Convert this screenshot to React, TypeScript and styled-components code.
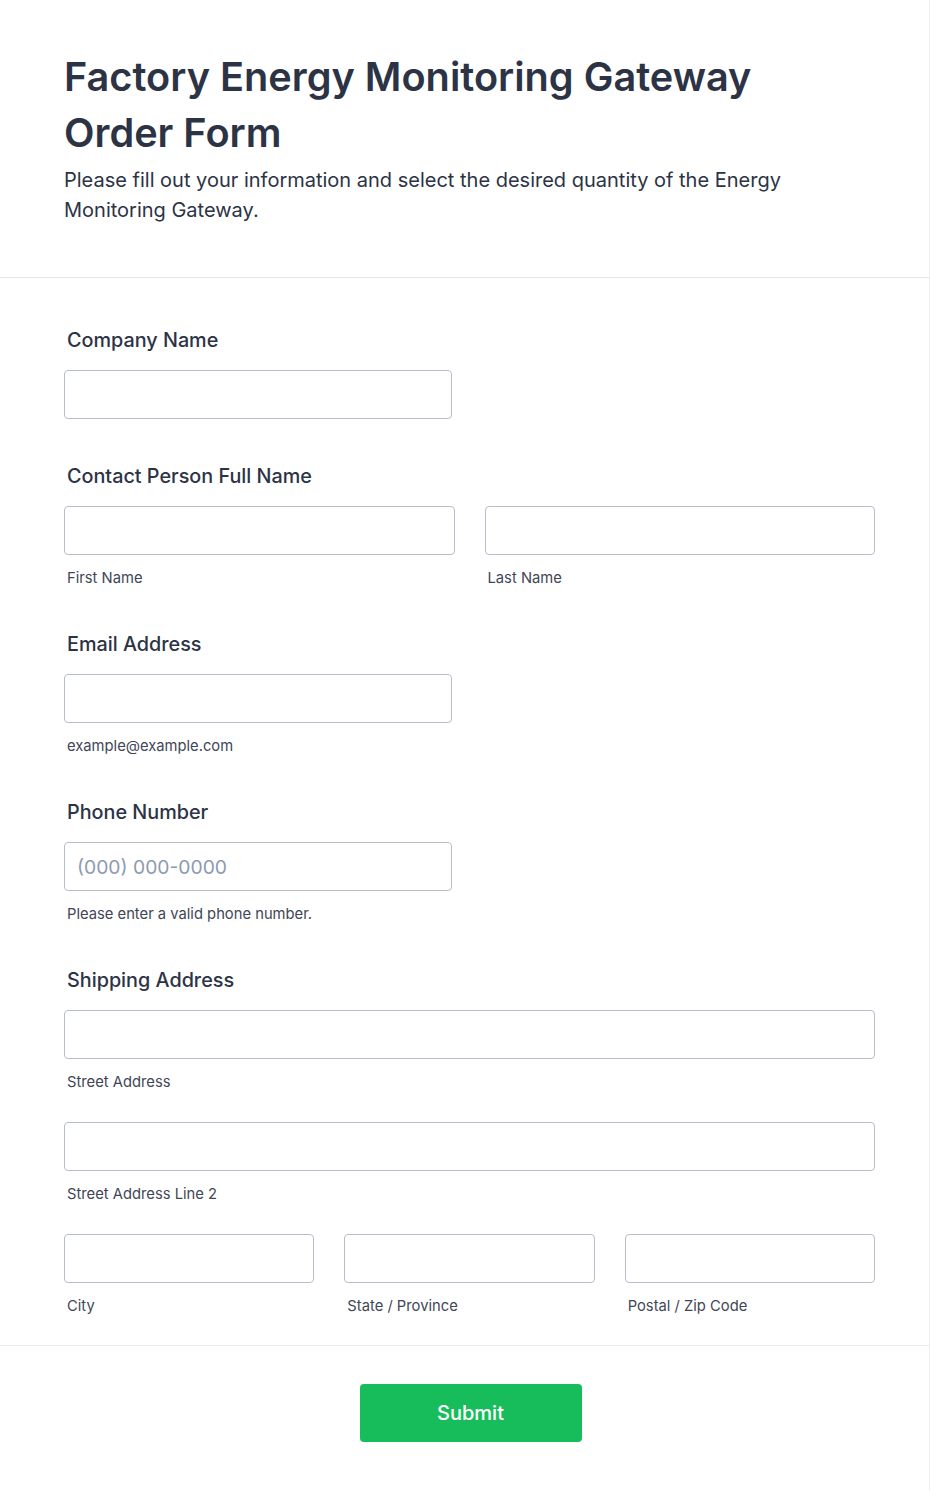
import React from "react";
import styled, { createGlobalStyle } from "styled-components";

const Global = createGlobalStyle`
  html, body { margin: 0; padding: 0; background: #ffffff; }
  body { font-family: Inter, "Noto Sans", sans-serif; color: #2c3345; }
  * { box-sizing: border-box; }
`;

const Page = styled.div`
  width: 930px;
  background: #ffffff;
  border-right: 1px solid #eeeff4;
`;

const Header = styled.header`
  padding: 49px 64px 52px;
  border-bottom: 1px solid #e4e6ee;
`;

const Title = styled.h1`
  margin: 0;
  font-size: 39.7px;
  line-height: 56px;
  font-weight: 600;
  color: #2c3345;
`;

const Subtitle = styled.p`
  margin: 4px 0 0;
  font-size: 20px;
  line-height: 30px;
  font-weight: 400;
  color: #2c3345;
  max-width: 760px;
`;

const Body = styled.main`
  padding: 50px 54px 30px 64px;
  display: flex;
  flex-direction: column;
  gap: 45px;
  border-bottom: 1px solid #e7ebf2;
`;

const Field = styled.section`
  display: flex;
  flex-direction: column;
`;

const Label = styled.label`
  display: block;
  padding-left: 3px;
  font-size: 19.8px;
  line-height: 24px;
  font-weight: 500;
  color: #2c3345;
  margin-bottom: 18px;
`;

const Row = styled.div<{ $cols: number }>`
  display: grid;
  grid-template-columns: repeat(${(p) => p.$cols}, 1fr);
  column-gap: 30px;
  row-gap: 31px;
`;

const Cell = styled.div`
  display: flex;
  flex-direction: column;
`;

const Input = styled.input<{ $narrow?: boolean }>`
  width: ${(p) => (p.$narrow ? "388px" : "100%")};
  height: 49px;
  border: 1px solid #b8bdc9;
  border-radius: 4px;
  background: #fff;
  padding: 0 12px;
  font-family: Inter, "Noto Sans", sans-serif;
  font-size: 19.3px;
  color: #2c3345;
  outline: none;
  &::placeholder { color: #8d9ab0; }
`;

const Sub = styled.span`
  display: block;
  margin-top: 14px;
  padding-left: 3px;
  font-size: 14.75px;
  line-height: 18px;
  color: #3f4656;
`;

const Footer = styled.footer`
  display: flex;
  justify-content: center;
  padding: 38px 0 50px;
`;

const Submit = styled.button`
  width: 222px;
  height: 58px;
  margin-left: 12px;
  border: none;
  border-radius: 4px;
  background: #18bd5b;
  color: #ffffff;
  font-family: Inter, "Noto Sans", sans-serif;
  font-size: 20px;
  font-weight: 500;
  cursor: pointer;
`;

export default function App() {
  return (
    <Page>
      <Global />
      <Header>
        <Title>Factory Energy Monitoring Gateway Order Form</Title>
        <Subtitle>
          Please fill out your information and select the desired quantity of the Energy
          Monitoring Gateway.
        </Subtitle>
      </Header>
      <Body>
        <Field>
          <Label>Company Name</Label>
          <Input $narrow />
        </Field>
        <Field>
          <Label>Contact Person Full Name</Label>
          <Row $cols={2}>
            <Cell>
              <Input />
              <Sub>First Name</Sub>
            </Cell>
            <Cell>
              <Input />
              <Sub>Last Name</Sub>
            </Cell>
          </Row>
        </Field>
        <Field>
          <Label>Email Address</Label>
          <Input $narrow />
          <Sub>example@example.com</Sub>
        </Field>
        <Field>
          <Label>Phone Number</Label>
          <Input $narrow placeholder="(000) 000-0000" />
          <Sub>Please enter a valid phone number.</Sub>
        </Field>
        <Field>
          <Label>Shipping Address</Label>
          <Row $cols={1}>
            <Cell>
              <Input />
              <Sub>Street Address</Sub>
            </Cell>
            <Cell>
              <Input />
              <Sub>Street Address Line 2</Sub>
            </Cell>
          </Row>
          <Row $cols={3} style={{ marginTop: 31 }}>
            <Cell>
              <Input />
              <Sub>City</Sub>
            </Cell>
            <Cell>
              <Input />
              <Sub>State / Province</Sub>
            </Cell>
            <Cell>
              <Input />
              <Sub>Postal / Zip Code</Sub>
            </Cell>
          </Row>
        </Field>
      </Body>
      <Footer>
        <Submit>Submit</Submit>
      </Footer>
    </Page>
  );
}
